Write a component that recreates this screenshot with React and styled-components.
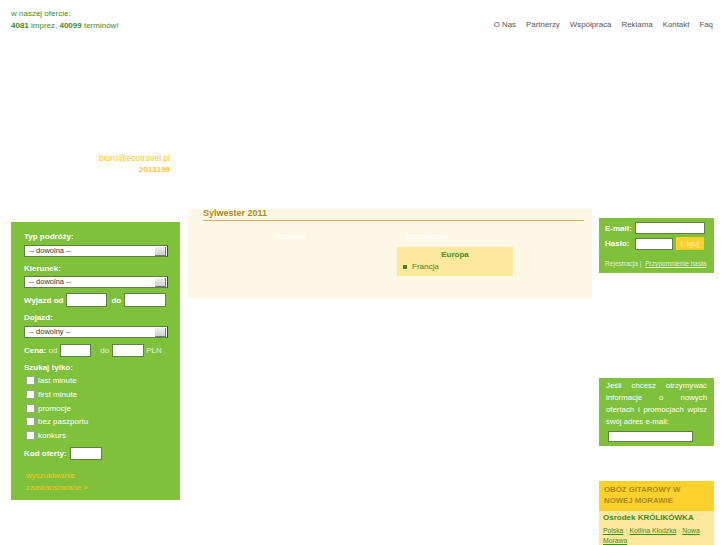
import React from "react";
import styled, { createGlobalStyle } from "styled-components";

const GREEN = "#80c13c";
const DARK_GREEN = "#3d8b1f";
const YELLOW = "#fcd12c";
const PALE_YELLOW = "#fde89c";
const GOLD = "#a8891f";

const GlobalStyle = createGlobalStyle`
  body {
    margin: 0;
    background: #fff;
    font-family: "Liberation Sans", Arial, sans-serif;
    font-size: 8px;
  }
`;

const Page = styled.div`
  width: 727px;
  height: 545px;
  overflow: hidden;
  padding-left: 11px;
  box-sizing: border-box;
`;

const TopRow = styled.div`
  display: flex;
  justify-content: space-between;
  padding: 8px 14px 0 0;
`;

const Offer = styled.div`
  color: ${DARK_GREEN};
  line-height: 12px;
  b {
    font-weight: bold;
  }
`;

const Nav = styled.nav`
  display: flex;
  gap: 10px;
  margin-top: 11px;
  line-height: 11px;
  a {
    color: #555;
    text-decoration: none;
    font-size: 7.9px;
  }
`;

const Contact = styled.div`
  width: 159px;
  margin-top: 121px;
  text-align: right;
  color: #f7c52e;
  line-height: 11px;
  font-size: 8.5px;
  b {
    display: block;
    font-size: 8px;
  }
`;

const Main = styled.div`
  display: flex;
  align-items: flex-start;
  margin-top: 34px;
`;

/* ---------- left search panel ---------- */

const SearchPanel = styled.form`
  width: 169px;
  height: 278px;
  margin-top: 13px;
  box-sizing: border-box;
  background: ${GREEN};
  padding: 9px 0 0 13px;
  color: #fff;
`;

const Label = styled.div`
  font-weight: bold;
  line-height: 11px;
  margin-top: ${(p) => p.$mt || 0}px;
`;

const FakeSelect = styled.div`
  position: relative;
  width: 144px;
  height: 12px;
  margin-top: ${(p) => p.$mt || 0}px;
  box-sizing: border-box;
  background: #fff;
  border: 1px solid #5f7f45;
  border-right-color: #3a4a30;
  color: #333;
  font-size: 7.5px;
  line-height: 10px;
  padding-left: 4px;
`;

const Arrow = styled.span`
  position: absolute;
  right: 1px;
  top: 1px;
  width: 10px;
  height: 8px;
  background: linear-gradient(#f0f0f0, #cfcfcf);
  border-right: 1px solid #777;
  border-bottom: 1px solid #777;
`;

const FieldRow = styled.div`
  display: flex;
  align-items: center;
  margin-top: ${(p) => p.$mt || 0}px;
  font-weight: ${(p) => (p.$bold ? "bold" : "normal")};
`;

const Input = styled.input`
  display: block;
  width: ${(p) => p.$w}px;
  height: ${(p) => p.$h || 14}px;
  margin: ${(p) => p.$mt || 0}px ${(p) => p.$mr || 0}px 0 ${(p) => p.$ml || 0}px;
  padding: 0;
  box-sizing: border-box;
  border: 1px solid #5f7f45;
  background: #fff;
  outline: none;
`;

const Muted = styled.span`
  color: #e6f2d6;
  font-weight: normal;
`;

const Checks = styled.div`
  margin-top: 1px;
  padding-left: 2px;
`;

const CheckRow = styled.label`
  display: flex;
  align-items: center;
  height: 13.7px;
  color: #fff;
`;

const Box = styled.span`
  width: 9px;
  height: 9px;
  box-sizing: border-box;
  background: #fbfbfb;
  border: 1px solid #9aa88e;
  margin-right: 3px;
`;

const MoreLink = styled.a`
  display: block;
  margin: ${(p) => p.$mt || 0}px 0 0 2px;
  color: #f5c61f;
  text-decoration: none;
  line-height: 12px;
`;

/* ---------- centre content ---------- */

const Content = styled.div`
  width: 404px;
  height: 89px;
  margin: 0 7px 0 8px;
  box-sizing: border-box;
  background: #fdf8e6;
  padding: 0 8px 0 15px;
`;

const Title = styled.h2`
  margin: 0;
  font-size: 9px;
  line-height: 9px;
  padding-bottom: 2px;
  color: ${GOLD};
  border-bottom: 1px solid #d7b45c;
`;

const Columns = styled.div`
  display: grid;
  grid-template-columns: 177px 116px;
  column-gap: 17px;
  margin-top: 10px;
`;

const ColHead = styled.div`
  color: #fff;
  line-height: 11px;
  text-align: ${(p) => p.$align || "center"};
  padding-left: ${(p) => p.$pl || 0}px;
`;

const Region = styled.div`
  margin-top: 5px;
  height: 29px;
  background: ${PALE_YELLOW};
  color: ${DARK_GREEN};
  box-sizing: border-box;
  padding-top: 2px;
`;

const RegionName = styled.div`
  text-align: center;
  font-weight: bold;
  line-height: 11px;
`;

const Country = styled.div`
  display: flex;
  align-items: center;
  padding-left: 6px;
  line-height: 13px;
  &::before {
    content: "";
    width: 4px;
    height: 4px;
    background: ${DARK_GREEN};
    margin-right: 5px;
  }
`;

/* ---------- right column ---------- */

const Side = styled.div`
  width: 115px;
  margin-top: 9px;
`;

const GreenBox = styled.div`
  background: ${GREEN};
  color: #fff;
  box-sizing: border-box;
  margin-top: ${(p) => p.$mt || 0}px;
  height: ${(p) => p.$h}px;
  padding: ${(p) => p.$pad};
`;

const LoginRow = styled.div`
  display: flex;
  align-items: center;
  margin-top: ${(p) => p.$mt || 0}px;
  font-weight: bold;
  span {
    width: 30px;
  }
`;

const LoginBtn = styled.button`
  width: 28px;
  height: 13px;
  margin-left: 3px;
  padding: 0;
  border: none;
  background: ${YELLOW};
  color: #fde9a6;
  font-family: inherit;
  font-size: 7.5px;
`;

const SmallLinks = styled.div`
  margin-top: 9px;
  font-size: 6.6px;
  color: #e3f0d2;
  line-height: 9px;
  a {
    color: #e3f0d2;
  }
`;

const Justified = styled.p`
  margin: 0;
  line-height: 12px;
  text-align: justify;
  font-size: 7.8px;
`;

const Promo = styled.div`
  margin-top: 35px;
`;

const PromoHead = styled.div`
  background: ${YELLOW};
  color: ${GOLD};
  font-weight: bold;
  line-height: 11px;
  padding: 3px 5px 5px;
  font-size: 7.8px;
`;

const PromoBody = styled.div`
  background: ${PALE_YELLOW};
  padding: 1px 4px 4px;
  color: ${DARK_GREEN};
  b {
    display: block;
    line-height: 11px;
    margin-bottom: 3px;
  }
`;

const PromoLinks = styled.div`
  font-size: 6.8px;
  line-height: 10px;
  a {
    color: ${DARK_GREEN};
  }
`;

const SelectBox = ({ value, mt }) => (
  <FakeSelect $mt={mt}>
    {value}
    <Arrow />
  </FakeSelect>
);

const checks = ["last minute", "first minute", "promocje", "bez paszportu", "konkurs"];

export default function App() {
  return (
    <>
      <GlobalStyle />
      <Page>
        <TopRow>
          <Offer>
            w naszej ofercie:
            <br />
            <b>4081</b> imprez, <b>40099</b> terminów!
          </Offer>
          <Nav>
            <a href="#">O Nas</a>
            <a href="#">Partnerzy</a>
            <a href="#">Współpraca</a>
            <a href="#">Reklama</a>
            <a href="#">Kontakt</a>
            <a href="#">Faq</a>
          </Nav>
        </TopRow>

        <Contact>
          biuro@ecotravel.pl
          <b>2013199</b>
        </Contact>

        <Main>
          <SearchPanel onSubmit={(e) => e.preventDefault()}>
            <Label>Typ podróży:</Label>
            <SelectBox value="-- dowolna --" mt={3} />
            <Label $mt={6}>Kierunek:</Label>
            <SelectBox value="-- dowolna --" mt={2} />
            <FieldRow $mt={5} $bold>
              Wyjazd od
              <Input $w={41} $ml={3} $mr={4} />
              do
              <Input $w={42} $ml={3} />
            </FieldRow>
            <Label $mt={5}>Dojazd:</Label>
            <SelectBox value="-- dowolny --" mt={3} />
            <FieldRow $mt={6} $bold>
              Cena:
              <Muted>&nbsp;od</Muted>
              <Input $w={31} $h={13} $ml={3} $mr={9} />
              <Muted>do</Muted>
              <Input $w={32} $h={13} $ml={3} $mr={2} />
              <Muted>PLN</Muted>
            </FieldRow>
            <Label $mt={5}>Szukaj tylko:</Label>
            <Checks>
              {checks.map((c) => (
                <CheckRow key={c}>
                  <Box />
                  {c}
                </CheckRow>
              ))}
            </Checks>
            <FieldRow $mt={5} $bold>
              Kod oferty:
              <Input $w={32} $h={13} $ml={3} />
            </FieldRow>
            <MoreLink href="#" $mt={10}>
              wyszukiwanie
              <br />
              zaawansowane »
            </MoreLink>
          </SearchPanel>

          <Content>
            <Title>Sylwester 2011</Title>
            <Columns>
              <div>
                <ColHead>Krajowe</ColHead>
              </div>
              <div>
                <ColHead $align="left" $pl={8}>
                  Zagraniczne
                </ColHead>
                <Region>
                  <RegionName>Europa</RegionName>
                  <Country>Francja</Country>
                </Region>
              </div>
            </Columns>
          </Content>

          <Side>
            <GreenBox $h={55} $pad="4px 0 0 6px">
              <LoginRow>
                <span>E-mail:</span>
                <Input $w={70} $h={12} />
              </LoginRow>
              <LoginRow $mt={3}>
                <span>Hasło:</span>
                <Input $w={38} $h={12} />
                <LoginBtn type="button">Loguj</LoginBtn>
              </LoginRow>
              <SmallLinks>
                Rejestracja |&nbsp; <a href="#">Przypomnienie hasła</a>
              </SmallLinks>
            </GreenBox>

            <GreenBox $mt={105} $h={68} $pad="2px 7px 0 7px">
              <Justified>
                Jeśli chcesz otrzymywać informacje o nowych ofertach i promocjach wpisz swój adres e-mail:
              </Justified>
              <Input $w={85} $h={11} $ml={2} $mt={3} />
            </GreenBox>

            <Promo>
              <PromoHead>
                OBÓZ GITAROWY W
                <br />
                NOWEJ MORAWIE
              </PromoHead>
              <PromoBody>
                <b>Ośrodek KRÓLIKÓWKA</b>
                <PromoLinks>
                  <a href="#">Polska</a> · <a href="#">Kotlina Kłodzka</a> · <a href="#">Nowa Morawa</a>
                </PromoLinks>
              </PromoBody>
            </Promo>
          </Side>
        </Main>
      </Page>
    </>
  );
}
